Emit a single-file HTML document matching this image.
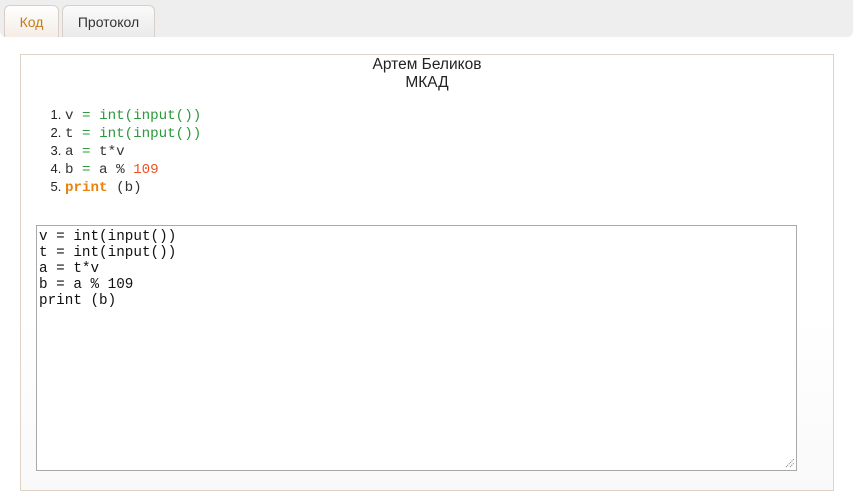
<!DOCTYPE html>
<html><head><meta charset="utf-8"><style>
body{margin:0;width:854px;height:498px;background:#fff;font-family:"Liberation Sans",sans-serif;position:relative;overflow:hidden}
.bar{position:absolute;left:0;top:0;width:853px;height:37px;background:#eeeeee;border-radius:0 0 6px 6px}
.tab{position:absolute;top:5px;height:32px;border:1px solid #d8d0c8;border-bottom:none;border-radius:6px 6px 0 0;font-size:14px;line-height:32px;text-align:center;box-sizing:border-box}
.t1{left:4px;width:55px;color:#c77a14;background:linear-gradient(#fff,#f4ede6)}
.t2{left:62px;width:93px;color:#333;background:linear-gradient(#fafafa,#eaeaea)}
.panel{position:absolute;left:20px;top:54px;width:814px;height:437px;box-sizing:border-box;border:1px solid #dfd3c8;background:linear-gradient(#fff 60%,#f9f9f9)}
.h{position:absolute;left:0;width:854px;text-align:center;font-size:15.5px;color:#222}
ol{position:absolute;left:25px;top:106px;margin:0;padding-left:40px;font-size:13px;color:#222}
li{height:18px;line-height:18px}
code{font-family:"Liberation Mono",monospace;font-size:14.2px;color:#333}
.g{color:#2a9a3a}.o{color:#f05020}.k{color:#e8830e;font-weight:bold}
.ta{position:absolute;left:36px;top:225px;width:761px;height:246px;box-sizing:border-box;border:1px solid #a9a9a9;background:#fff;padding:3px 2px;font-family:"Liberation Mono",monospace;font-size:14.3px;line-height:16px;white-space:pre;color:#111}
</style></head><body>
<div class="bar"></div>
<div class="tab t1">Код</div>
<div class="tab t2">Протокол</div>
<div class="panel"></div>
<div class="h" style="top:56px">Артем Беликов</div>
<div class="h" style="top:74px">МКАД</div>
<ol>
<li><code>v <span class="g">=</span> <span class="g">int(input())</span></code></li>
<li><code>t <span class="g">=</span> <span class="g">int(input())</span></code></li>
<li><code>a <span class="g">=</span> t*v</code></li>
<li><code>b <span class="g">=</span> a % <span class="o">109</span></code></li>
<li><code><span class="k">print</span> (b)</code></li>
</ol>
<div class="ta">v = int(input())
t = int(input())
a = t*v
b = a % 109
print (b)</div>
<svg style="position:absolute;left:785px;top:458px" width="10" height="10"><path d="M1 9L9 1M5 9L9 5" stroke="#777" stroke-width="1" stroke-dasharray="1 1"/></svg>
</body></html>
